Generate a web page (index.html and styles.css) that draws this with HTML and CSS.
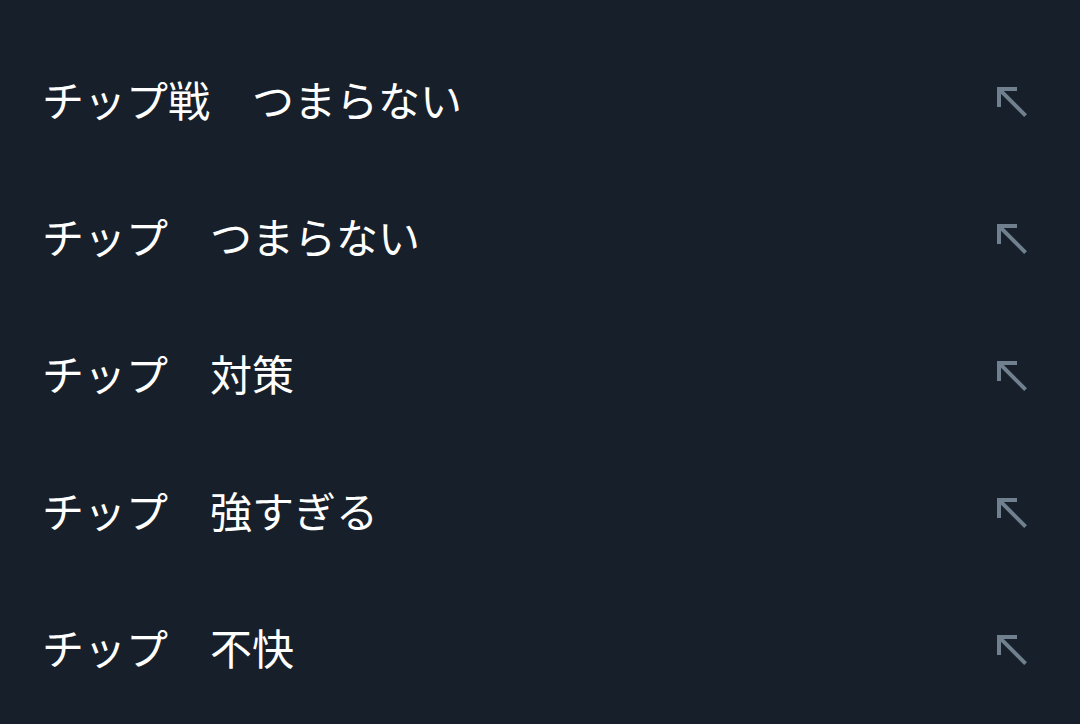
FILE: index.html
```html
<!DOCTYPE html>
<html lang="ja">
<head>
  <meta charset="UTF-8" />
  <meta name="viewport" content="width=device-width, initial-scale=1" />
  <title>検索候補</title>
  <link rel="stylesheet" href="styles.css">
</head>
<body>

  <ul class="suggestions">
    <li class="suggestion">
      <span class="suggestion-text">チップ戦　つまらない</span>
      <svg class="fill-arrow" viewBox="0 0 24 24" aria-hidden="true"><path d="M5 15h2V8.41L18.59 20 20 18.59 8.41 7H15V5H5z"/></svg>
    </li>
    <li class="suggestion">
      <span class="suggestion-text">チップ　つまらない</span>
      <svg class="fill-arrow" viewBox="0 0 24 24" aria-hidden="true"><path d="M5 15h2V8.41L18.59 20 20 18.59 8.41 7H15V5H5z"/></svg>
    </li>
    <li class="suggestion">
      <span class="suggestion-text">チップ　対策</span>
      <svg class="fill-arrow" viewBox="0 0 24 24" aria-hidden="true"><path d="M5 15h2V8.41L18.59 20 20 18.59 8.41 7H15V5H5z"/></svg>
    </li>
    <li class="suggestion">
      <span class="suggestion-text">チップ　強すぎる</span>
      <svg class="fill-arrow" viewBox="0 0 24 24" aria-hidden="true"><path d="M5 15h2V8.41L18.59 20 20 18.59 8.41 7H15V5H5z"/></svg>
    </li>
    <li class="suggestion">
      <span class="suggestion-text">チップ　不快</span>
      <svg class="fill-arrow" viewBox="0 0 24 24" aria-hidden="true"><path d="M5 15h2V8.41L18.59 20 20 18.59 8.41 7H15V5H5z"/></svg>
    </li>
  </ul>

</body>
</html>
```

FILE: styles.css
```css
body {
  margin: 0;
  background: #17202a;
  color: #ffffff;
  font-family: "Noto Sans CJK JP", "Noto Sans", sans-serif;
}

ul.suggestions {
  list-style: none;
  margin: 0;
  padding: 32px 0 0;
}

.suggestion {
  height: 137px;
  display: flex;
  align-items: center;
  justify-content: space-between;
  padding: 0 45px 0 42px;
}

.suggestion-text {
  font-size: 42px;
  line-height: 1;
  margin-bottom: 3px;
}

/* "fill in search box" arrow */
.fill-arrow {
  width: 48px;
  height: 48px;
  fill: #71808e;
}
```
